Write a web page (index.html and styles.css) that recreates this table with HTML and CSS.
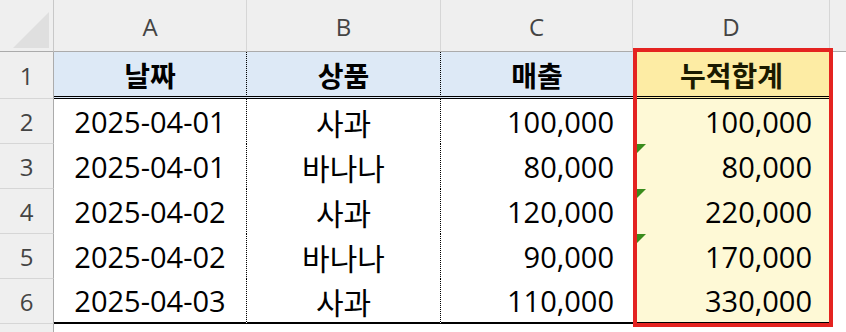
FILE: index.html
```html
<!DOCTYPE html>
<html lang="ko">
<head>
<meta charset="utf-8">
<link rel="stylesheet" href="styles.css">
</head>
<body>
<div class="sheet">
  <div class="corner"><svg class="tri" width="54" height="52" viewBox="0 0 54 52"><polygon points="49,12 49,48 13,48" fill="#dfdfdf"/></svg></div>
  <div class="colhdr">A</div>
  <div class="colhdr">B</div>
  <div class="colhdr">C</div>
  <div class="colhdr">D</div>
  <div class="colhdr last"></div>

  <div class="rowhdr r1">1</div>
  <div class="cell head blue dot">날짜</div>
  <div class="cell head blue dot">상품</div>
  <div class="cell head blue right">매출</div>
  <div class="cell head yellow">누적합계</div>
  <div class="cell blank r1b"></div>

  <div class="rowhdr">2</div>
  <div class="cell dot center">2025-04-01</div>
  <div class="cell dot center ko">사과</div>
  <div class="cell num">100,000</div>
  <div class="cell num pale">100,000</div>
  <div class="cell blank"></div>

  <div class="rowhdr">3</div>
  <div class="cell dot center">2025-04-01</div>
  <div class="cell dot center ko">바나나</div>
  <div class="cell num">80,000</div>
  <div class="cell num pale warn">80,000</div>
  <div class="cell blank"></div>

  <div class="rowhdr">4</div>
  <div class="cell dot center">2025-04-02</div>
  <div class="cell dot center ko">사과</div>
  <div class="cell num">120,000</div>
  <div class="cell num pale warn">220,000</div>
  <div class="cell blank"></div>

  <div class="rowhdr">5</div>
  <div class="cell dot center">2025-04-02</div>
  <div class="cell dot center ko">바나나</div>
  <div class="cell num">90,000</div>
  <div class="cell num pale warn">170,000</div>
  <div class="cell blank"></div>

  <div class="rowhdr">6</div>
  <div class="cell dot center end">2025-04-03</div>
  <div class="cell dot center end ko">사과</div>
  <div class="cell num end">110,000</div>
  <div class="cell num pale end">330,000</div>
  <div class="cell blank"></div>

  <div class="rowhdr tail"></div>
  <div class="cell blank"></div>
  <div class="cell blank"></div>
  <div class="cell blank"></div>
  <div class="cell blank"></div>
  <div class="cell blank"></div>

  <div class="highlight"></div>
</div>
</body>
</html>
```

FILE: styles.css
```css
* { box-sizing: border-box; }
html, body { margin: 0; padding: 0; background: #fff; }
body { width: 846px; height: 332px; overflow: hidden; }

.sheet {
  position: relative;
  display: grid;
  grid-template-columns: 54px 193px 194px 192px 197px 16px;
  grid-template-rows: 52px 47px 45px 45px 45px 45px 45px 8px;
  font-family: "Open Sans", "Noto Sans CJK KR", sans-serif;
  font-size: 29px;
  color: #000;
}

.corner {
  background: #efefef;
  border-right: 1px solid #c8c8c8;
  border-bottom: 1px solid #ababab;
  position: relative;
}
.tri { display: block; }

.colhdr {
  background: #efefef;
  border-right: 1px solid #d6d6d6;
  border-bottom: 1px solid #ababab;
  color: #444;
  font-size: 24px;
  display: flex;
  align-items: center;
  justify-content: center;
  padding-top: 2px;
}
.colhdr.last { border-right: none; }

.rowhdr {
  background: #efefef;
  border-right: 1px solid #ababab;
  border-bottom: 1px solid #d6d6d6;
  color: #444;
  font-size: 24px;
  display: flex;
  align-items: center;
  justify-content: center;
}
.rowhdr.tail { border-bottom: none; }

.cell {
  display: flex;
  align-items: center;
  position: relative;
  white-space: nowrap;
}
.cell.dot { border-right: 1px dotted #000; }
.cell.center { justify-content: center; }
.cell.ko { font-size: 30px; }
.cell.num { justify-content: flex-end; padding-right: 19px; }
.cell.pale { background: #fef9d6; padding-right: 18px; }

.cell.head {
  font-weight: 700;
  font-size: 28px;
  justify-content: center;
  border-bottom: 3px double #000;
  padding-top: 1px;
}
.cell.head.right { border-right: none; }
.blue { background: #dde9f6; }
.yellow { background: #fdeca4; color: #1a1a00; }

.cell.end { border-bottom: 2px solid #000; }

.warn::before {
  content: "";
  position: absolute;
  left: 4px;
  top: 0;
  border-top: 9px solid #3a8c1c;
  border-right: 9px solid transparent;
}

.highlight {
  position: absolute;
  left: 633px;
  top: 48px;
  width: 200px;
  height: 279px;
  border: 4px solid #e42320;
  pointer-events: none;
}
```
